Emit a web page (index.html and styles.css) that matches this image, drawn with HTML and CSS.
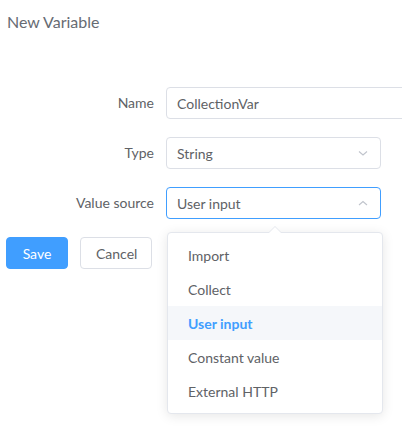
FILE: index.html
```html
<!DOCTYPE html>
<html>
<head>
<meta charset="utf-8">
<link rel="stylesheet" href="styles.css">
</head>
<body>
<div class="page">
  <div class="title">New Variable</div>
  <div class="form">
    <div class="row">
      <label class="label">Name</label>
      <div class="input wide"><span class="value">CollectionVar</span></div>
    </div>
    <div class="row">
      <label class="label">Type</label>
      <div class="input select"><span class="value">String</span>
        <svg class="chev" width="12" height="12" viewBox="0 0 12 12"><path d="M2 4.5 L6 8 L10 4.5" fill="none" stroke="#c0c4cc" stroke-width="1.1"/></svg>
      </div>
    </div>
    <div class="row">
      <label class="label">Value source</label>
      <div class="select-wrap">
        <div class="input select focus"><span class="value">User input</span>
          <svg class="chev" width="12" height="12" viewBox="0 0 12 12"><path d="M2 8 L6 4.5 L10 8" fill="none" stroke="#c0c4cc" stroke-width="1.1"/></svg>
        </div>
        <div class="dropdown">
          <div class="arrow"></div>
          <ul class="list">
            <li class="item">Import</li>
            <li class="item">Collect</li>
            <li class="item selected">User input</li>
            <li class="item">Constant value</li>
            <li class="item">External HTTP</li>
          </ul>
        </div>
      </div>
    </div>
    <div class="actions">
      <button class="btn primary">Save</button>
      <button class="btn">Cancel</button>
    </div>
  </div>
</div>
</body>
</html>
```
FILE: styles.css
```css
html, body {
  margin: 0;
  padding: 0;
  background: #fff;
}
body {
  font-family: Lato, "Noto Sans", sans-serif;
  font-size: 14px;
  color: #606266;
}
.page {
  box-sizing: border-box;
  width: 402px;
  height: 433px;
  overflow: hidden;
  padding: 0 6px;
}
.title {
  height: 44px;
  line-height: 44px;
  font-size: 16px;
  color: #676b73;
  padding-left: 1px;
}
.form {
  margin-top: 43px;
  display: flex;
  flex-direction: column;
  gap: 18px;
}
.row {
  display: flex;
  align-items: center;
  gap: 12px;
}
.label {
  flex: none;
  width: 148px;
  text-align: right;
  line-height: 32px;
  color: #606266;
}
.input {
  box-sizing: border-box;
  height: 32px;
  border: 1px solid #dcdfe6;
  border-radius: 4px;
  display: flex;
  align-items: center;
  padding: 0 10px;
  color: #606266;
  position: relative;
  background: #fff;
  flex: none;
}
.input.wide {
  width: 260px;
}
.input.select {
  width: 215px;
  justify-content: space-between;
}
.input.focus {
  border-color: #409eff;
}
.chev {
  margin-right: 1px;
}
.select-wrap {
  position: relative;
  flex: none;
}
.dropdown {
  position: absolute;
  top: 45px;
  left: 1px;
  width: 216px;
  box-sizing: border-box;
  border: 1px solid #e4e7ed;
  border-radius: 4px;
  background: #fff;
  box-shadow: 0 2px 12px rgba(0, 0, 0, 0.1);
  z-index: 10;
}
.arrow {
  position: absolute;
  top: -7px;
  left: 100px;
  width: 0;
  height: 0;
  border-left: 7px solid transparent;
  border-right: 7px solid transparent;
  border-bottom: 7px solid #e4e7ed;
}
.arrow::after {
  content: "";
  position: absolute;
  top: 1px;
  left: -6px;
  border-left: 6px solid transparent;
  border-right: 6px solid transparent;
  border-bottom: 6px solid #fff;
}
.list {
  list-style: none;
  margin: 0;
  padding: 5px 0;
}
.item {
  box-sizing: border-box;
  height: 34px;
  line-height: 34px;
  padding: 1px 20px 0;
  color: #606266;
}
.item.selected {
  background: #f5f7fa;
  color: #409eff;
  font-weight: 700;
}
.actions {
  display: flex;
  gap: 12px;
}
.btn {
  box-sizing: border-box;
  height: 32px;
  padding: 0 15px;
  font-family: inherit;
  font-size: 14px;
  border-radius: 4px;
  border: 1px solid #dcdfe6;
  background: #fff;
  color: #606266;
  width: 72px;
}
.btn.primary {
  background: #409eff;
  border-color: #409eff;
  color: #fff;
  width: 62px;
}
```
